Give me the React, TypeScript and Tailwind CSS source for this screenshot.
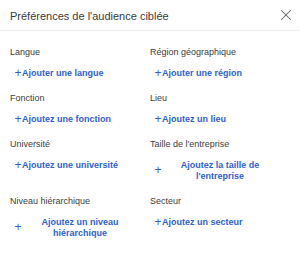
import { X } from "lucide-react";

const fields = [
  { label: "Langue", action: "Ajouter une langue" },
  { label: "Région géographique", action: "Ajouter une région" },
  { label: "Fonction", action: "Ajoutez une fonction" },
  { label: "Lieu", action: "Ajoutez un lieu" },
  { label: "Université", action: "Ajoutez une université" },
  { label: "Taille de l'entreprise", action: "Ajoutez la taille de l'entreprise" },
  { label: "Niveau hiérarchique", action: "Ajoutez un niveau hiérarchique" },
  { label: "Secteur", action: "Ajoutez un secteur" },
];

export default function App() {
  return (
    <div
      className="w-[300px] h-[262px] bg-white overflow-hidden"
      style={{ fontFamily: '"Liberation Sans", Arial, sans-serif' }}
    >
      <div className="h-[31px] flex items-center justify-between pl-[10px] pr-[5px] border-b border-[#eeeeee]">
        <h2 className="text-[11px] leading-[14px] text-[#3a3a3a] pt-[1px]">
          Préférences de l&apos;audience ciblée
        </h2>
        <button className="text-[#666666]">
          <X size={18} strokeWidth={1.4} />
        </button>
      </div>
      <div className="grid grid-cols-2 px-[10px] pt-[15px] gap-y-[7px]">
        {fields.map((f) => (
          <div key={f.label} className="flex flex-col items-start">
            <p className="text-[9px] leading-[12px] text-[#3d3d3d]">{f.label}</p>
            <button className="mt-[4px] max-w-[132px] px-1 py-[6px] inline-flex items-center text-[#2f5fce] font-bold text-[9px] leading-[11px]">
              <span className="text-[12px] font-normal leading-[11px] shrink-0 w-[8px] -mt-[1px]">+</span>
              <span className="text-center">{f.action}</span>
            </button>
          </div>
        ))}
      </div>
    </div>
  );
}
